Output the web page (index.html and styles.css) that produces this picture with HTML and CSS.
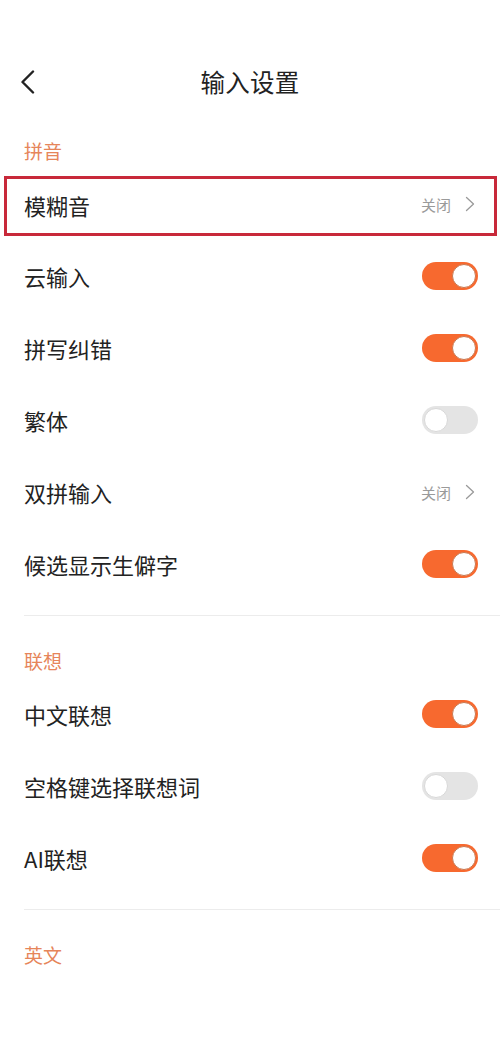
FILE: index.html
```html
<!DOCTYPE html>
<html lang="zh-CN">
<head>
<meta charset="utf-8">
<title>输入设置</title>
<link rel="stylesheet" href="styles.css">
</head>
<body>
<div class="page">
  <header class="nav">
    <span class="back">
      <svg width="16" height="24" viewBox="0 0 16 24"><polyline points="13,1.5 2.5,12 13,22.5" fill="none" stroke="#222" stroke-width="2.4" stroke-linecap="round" stroke-linejoin="round"/></svg>
    </span>
    <h1 class="title">输入设置</h1>
  </header>

  <section class="section">
    <div class="sec-head">拼音</div>
    <div class="row highlighted">
      <span class="label">模糊音</span>
      <span class="value">关闭<svg class="chev" width="10" height="16" viewBox="0 0 10 16"><polyline points="1.5,1.5 8.5,8 1.5,14.5" fill="none" stroke="#9a9a9a" stroke-width="1.3" stroke-linecap="round" stroke-linejoin="round"/></svg></span>
    </div>
    <div class="row"><span class="label">云输入</span><span class="switch on"><span class="knob"></span></span></div>
    <div class="row"><span class="label">拼写纠错</span><span class="switch on"><span class="knob"></span></span></div>
    <div class="row"><span class="label">繁体</span><span class="switch"><span class="knob"></span></span></div>
    <div class="row">
      <span class="label">双拼输入</span>
      <span class="value">关闭<svg class="chev" width="10" height="16" viewBox="0 0 10 16"><polyline points="1.5,1.5 8.5,8 1.5,14.5" fill="none" stroke="#9a9a9a" stroke-width="1.3" stroke-linecap="round" stroke-linejoin="round"/></svg></span>
    </div>
    <div class="row"><span class="label">候选显示生僻字</span><span class="switch on"><span class="knob"></span></span></div>
  </section>

  <section class="section">
    <div class="sec-head">联想</div>
    <div class="row"><span class="label">中文联想</span><span class="switch on"><span class="knob"></span></span></div>
    <div class="row"><span class="label">空格键选择联想词</span><span class="switch"><span class="knob"></span></span></div>
    <div class="row"><span class="label">AI联想</span><span class="switch on"><span class="knob"></span></span></div>
  </section>

  <section class="section last">
    <div class="sec-head">英文</div>
  </section>
</div>
</body>
</html>
```

FILE: styles.css
```css
* { box-sizing: border-box; }
html, body { margin: 0; padding: 0; background: #fff; }
body {
  font-family: "Noto Sans CJK SC", "Noto Sans", sans-serif;
  color: #222;
  width: 500px;
  height: 1056px;
  overflow: hidden;
}
.page { padding-top: 58px; }

.nav {
  height: 48px;
  display: flex;
  align-items: center;
  justify-content: center;
  position: relative;
}
.back {
  position: absolute;
  left: 20px;
  top: 12px;
  display: flex;
}
.title {
  margin: 0;
  font-size: 24.5px;
  font-weight: 400;
  line-height: 48px;
  color: #222;
  letter-spacing: 0.3px;
}

.section {
  margin-left: 24px;
  padding-bottom: 15px;
  border-bottom: 1px solid #ececec;
}
.section.last { border-bottom: none; }

.sec-head {
  padding-top: 32px;
  padding-bottom: 4px;
  line-height: 26px;
  font-size: 19px;
  color: #e6855a;
}

.row {
  height: 72px;
  display: flex;
  align-items: center;
  justify-content: space-between;
  padding-right: 22px;
  position: relative;
}
.label {
  font-size: 22px;
  color: #222;
  line-height: 30px;
}
.highlighted::after {
  content: "";
  position: absolute;
  left: -20px;
  right: 3px;
  top: 8px;
  bottom: 4px;
  border: 3px solid #c8293a;
  pointer-events: none;
}
.highlighted .label { margin-top: 2px; }

.value {
  display: flex;
  align-items: center;
  gap: 14px;
  font-size: 15px;
  color: #9a9a9a;
  padding-right: 3px;
}

.switch {
  width: 56px;
  height: 28px;
  border-radius: 14px;
  background: #e4e4e4;
  position: relative;
  flex: none;
}
.switch .knob {
  position: absolute;
  top: 2px;
  left: 2px;
  width: 24px;
  height: 24px;
  border-radius: 50%;
  background: #fff;
  border: 1px solid #d8d8d8;
}
.switch.on { background: #f7692f; }
.switch.on .knob {
  left: auto;
  right: 2px;
  border-color: #c9774f;
}
```
